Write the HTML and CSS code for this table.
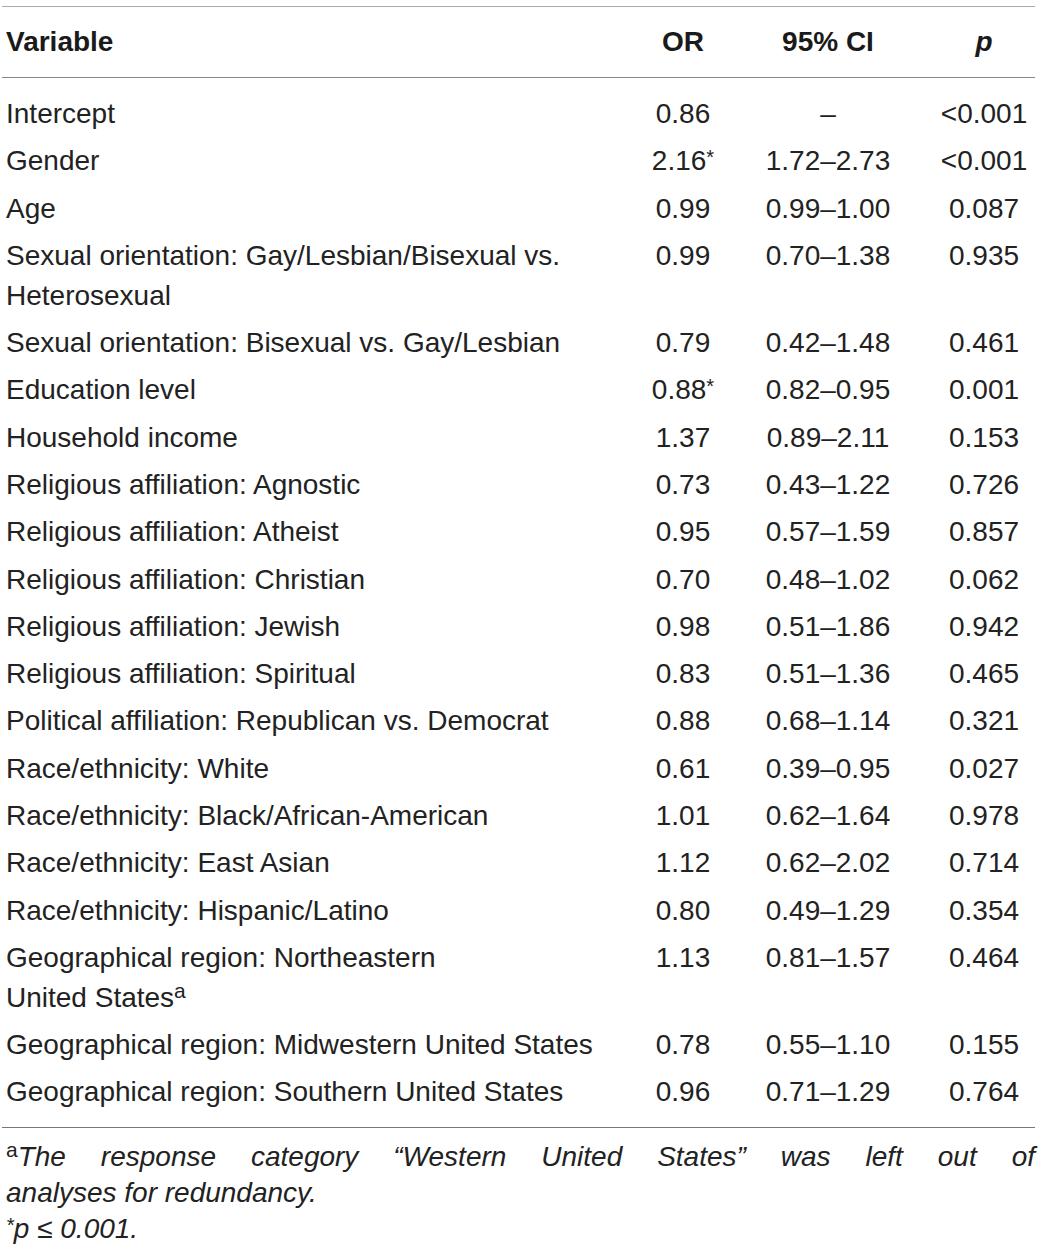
FILE: index.html
```html
<!DOCTYPE html>
<html lang="en">

<head>
    <meta charset="UTF-8">
    <meta name="viewport" content="width=device-width, initial-scale=1.0">
    <title>Logistic regression results</title>
    <link rel="stylesheet" href="styles.css">
</head>

<body>
    <div class="table-wrap">
        <table class="results">
            <thead>
                <tr>
                    <th class="var">Variable</th>
                    <th class="or">OR</th>
                    <th class="ci">95% CI</th>
                    <th class="p"><i>p</i></th>
                </tr>
            </thead>
            <tbody>
                <tr><td class="var">Intercept</td><td class="or">0.86</td><td class="ci">&ndash;</td><td class="p">&lt;0.001</td></tr>
                <tr><td class="var">Gender</td><td class="or">2.16<span class="star">*</span></td><td class="ci">1.72&ndash;2.73</td><td class="p">&lt;0.001</td></tr>
                <tr><td class="var">Age</td><td class="or">0.99</td><td class="ci">0.99&ndash;1.00</td><td class="p">0.087</td></tr>
                <tr><td class="var">Sexual orientation: Gay/Lesbian/Bisexual vs.<br>Heterosexual</td><td class="or">0.99</td><td class="ci">0.70&ndash;1.38</td><td class="p">0.935</td></tr>
                <tr><td class="var">Sexual orientation: Bisexual vs. Gay/Lesbian</td><td class="or">0.79</td><td class="ci">0.42&ndash;1.48</td><td class="p">0.461</td></tr>
                <tr><td class="var">Education level</td><td class="or">0.88<span class="star">*</span></td><td class="ci">0.82&ndash;0.95</td><td class="p">0.001</td></tr>
                <tr><td class="var">Household income</td><td class="or">1.37</td><td class="ci">0.89&ndash;2.11</td><td class="p">0.153</td></tr>
                <tr><td class="var">Religious affiliation: Agnostic</td><td class="or">0.73</td><td class="ci">0.43&ndash;1.22</td><td class="p">0.726</td></tr>
                <tr><td class="var">Religious affiliation: Atheist</td><td class="or">0.95</td><td class="ci">0.57&ndash;1.59</td><td class="p">0.857</td></tr>
                <tr><td class="var">Religious affiliation: Christian</td><td class="or">0.70</td><td class="ci">0.48&ndash;1.02</td><td class="p">0.062</td></tr>
                <tr><td class="var">Religious affiliation: Jewish</td><td class="or">0.98</td><td class="ci">0.51&ndash;1.86</td><td class="p">0.942</td></tr>
                <tr><td class="var">Religious affiliation: Spiritual</td><td class="or">0.83</td><td class="ci">0.51&ndash;1.36</td><td class="p">0.465</td></tr>
                <tr><td class="var">Political affiliation: Republican vs. Democrat</td><td class="or">0.88</td><td class="ci">0.68&ndash;1.14</td><td class="p">0.321</td></tr>
                <tr><td class="var">Race/ethnicity: White</td><td class="or">0.61</td><td class="ci">0.39&ndash;0.95</td><td class="p">0.027</td></tr>
                <tr><td class="var">Race/ethnicity: Black/African-American</td><td class="or">1.01</td><td class="ci">0.62&ndash;1.64</td><td class="p">0.978</td></tr>
                <tr><td class="var">Race/ethnicity: East Asian</td><td class="or">1.12</td><td class="ci">0.62&ndash;2.02</td><td class="p">0.714</td></tr>
                <tr><td class="var">Race/ethnicity: Hispanic/Latino</td><td class="or">0.80</td><td class="ci">0.49&ndash;1.29</td><td class="p">0.354</td></tr>
                <tr><td class="var">Geographical region: Northeastern<br>United States<sup class="note">a</sup></td><td class="or">1.13</td><td class="ci">0.81&ndash;1.57</td><td class="p">0.464</td></tr>
                <tr><td class="var">Geographical region: Midwestern United States</td><td class="or">0.78</td><td class="ci">0.55&ndash;1.10</td><td class="p">0.155</td></tr>
                <tr><td class="var">Geographical region: Southern United States</td><td class="or">0.96</td><td class="ci">0.71&ndash;1.29</td><td class="p">0.764</td></tr>
            </tbody>
        </table>

        <div class="footnotes">
            <p><span class="spread"><sup class="note">a</sup><i>The response category &ldquo;Western United States&rdquo; was left out of</i></span><i>analyses for redundancy.</i></p>
            <p><i><span class="star">*</span>p &le; 0.001.</i></p>
        </div>
    </div>
</body>

</html>
```

FILE: styles.css
```css
body {
    margin: 0;
    font-family: "Liberation Sans", Arial, sans-serif;
    color: #222;
    background: #fff;
}

.table-wrap {
    padding: 6px 8px 0 2px;
}

.results {
    width: 100%;
    border-collapse: collapse;
    font-size: 28px;
    line-height: 40px;
    table-layout: fixed;
}

.results th {
    height: 70px;
    padding: 0 4px;
    font-weight: bold;
    color: #1a1a1a;
    border-top: 1px solid #aaa;
    border-bottom: 1px solid #888;
}

.results td {
    padding: 3.65px 4px;
    vertical-align: top;
}

.results tbody tr:first-child td {
    padding-top: 16px;
}

.results tbody tr:last-child td {
    padding-bottom: 15px;
    border-bottom: 1px solid #777;
}

.var {
    width: 607px;
    text-align: left;
}

.or {
    width: 124px;
    text-align: center;
}

.ci {
    width: 150px;
    text-align: center;
}

.p {
    text-align: center;
}

.results .p {
    padding-left: 26px;
    padding-right: 0;
}

.star {
    font-size: 20px;
    vertical-align: 6px;
    line-height: 0;
}

.note {
    font-size: 21px;
    line-height: 0;
    vertical-align: 9px;
}

.footnotes {
    font-size: 28px;
    line-height: 36px;
    padding: 11px 0 0 4px;
}

.footnotes p {
    margin: 0;
}

.spread {
    display: block;
    text-align: justify;
    text-align-last: justify;
}
```
